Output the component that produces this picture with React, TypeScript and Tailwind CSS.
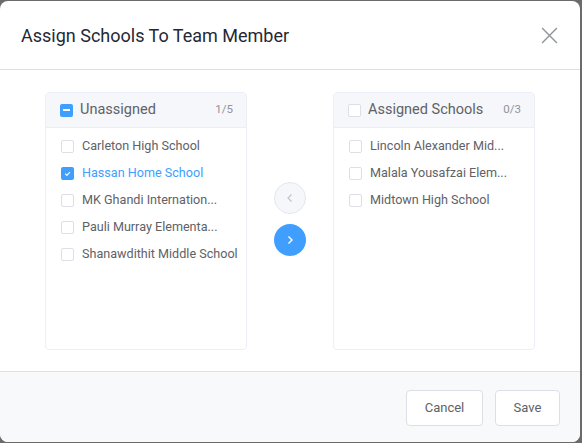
import React from 'react';

type Item = { label: string; checked?: boolean };

const unassigned: Item[] = [
  { label: 'Carleton High School' },
  { label: 'Hassan Home School', checked: true },
  { label: 'MK Ghandi Internation...' },
  { label: 'Pauli Murray Elementa...' },
  { label: 'Shanawdithit Middle School' },
];

const assigned: Item[] = [
  { label: 'Lincoln Alexander Mid...' },
  { label: 'Malala Yousafzai Elem...' },
  { label: 'Midtown High School' },
];

const Box = ({ state }: { state: 'off' | 'on' | 'mixed' }) => {
  if (state === 'off') {
    return <span className="w-[13px] h-[13px] shrink-0 rounded-[2px] border border-[#dcdfe6] bg-white" />;
  }
  return (
    <span className="w-[13px] h-[13px] shrink-0 rounded-[2px] bg-[#409eff] flex items-center justify-center">
      {state === 'on' ? (
        <svg width="9" height="9" viewBox="0 0 10 10" fill="none">
          <path d="M2.5 5.2l1.8 1.8 3.4-3.6" stroke="white" strokeWidth="1.3" />
        </svg>
      ) : (
        <span className="w-[7px] h-[2px] bg-white" />
      )}
    </span>
  );
};

const Panel = ({ title, count, head, items }: { title: string; count: string; head: 'off' | 'mixed'; items: Item[] }) => (
  <div className="w-[202px] h-[258px] border border-[#ebeef5] rounded-[4px] bg-white overflow-hidden flex flex-col">
    <div className="h-[35px] bg-[#f5f7fa] border-b border-[#ebeef5] flex items-center pl-[14px] pr-[13px]">
      <Box state={head} />
      <span className="ml-[7px] text-[14.5px] text-[#606266]">{title}</span>
      <span className="ml-auto text-[11.5px] text-[#909399]">{count}</span>
    </div>
    <div className="pt-[5px]">
      {items.map((it) => (
        <div key={it.label} className="h-[27px] flex items-center pl-[15px]">
          <Box state={it.checked ? 'on' : 'off'} />
          <span className={`ml-[8px] text-[12.6px] whitespace-nowrap ${it.checked ? 'text-[#409eff]' : 'text-[#606266]'}`}>
            {it.label}
          </span>
        </div>
      ))}
    </div>
  </div>
);

export default function App() {
  return (
    <div className="w-[582px] h-[443px] bg-[#6b6b6b] pt-px font-['Roboto',sans-serif]">
      <div className="w-[580px] h-[441px] bg-white rounded-[8px] overflow-hidden flex flex-col">
        <div className="h-[69px] shrink-0 border-b border-[#dcdfe6] flex items-center justify-between pl-[21px] pr-[22px]">
          <h2 className="text-[18px] text-[#1f2937]">Assign Schools To Team Member</h2>
          <svg width="17" height="17" viewBox="0 0 16 16" fill="none">
            <path d="M1 1l14 14M15 1L1 15" stroke="#909399" strokeWidth="1.3" />
          </svg>
        </div>
        <div className="h-[301px] shrink-0 flex items-start justify-center gap-[27px] pt-[22px]">
          <Panel title="Unassigned" count="1/5" head="mixed" items={unassigned} />
          <div className="flex flex-col gap-[10px] mt-[90px]">
            <div className="w-[32px] h-[32px] rounded-full bg-[#f5f7fa] border border-[#e4e7ed] flex items-center justify-center">
              <svg width="10" height="10" viewBox="0 0 10 10" fill="none">
                <path d="M6.5 1.5L3 5l3.5 3.5" stroke="#c0c4cc" strokeWidth="1.2" />
              </svg>
            </div>
            <div className="w-[32px] h-[32px] rounded-full bg-[#409eff] flex items-center justify-center">
              <svg width="10" height="10" viewBox="0 0 10 10" fill="none">
                <path d="M3.5 1.5L7 5 3.5 8.5" stroke="white" strokeWidth="1.4" />
              </svg>
            </div>
          </div>
          <Panel title="Assigned Schools" count="0/3" head="off" items={assigned} />
        </div>
        <div className="flex-1 bg-[#f8f9fb] border-t border-[#dcdfe6] flex items-center justify-end gap-[12px] pr-[20px] pt-[2px]">
          <button className="w-[77px] h-[36px] bg-white border border-[#dcdfe6] rounded-[4px] text-[13px] text-[#606266]">Cancel</button>
          <button className="w-[65px] h-[36px] bg-white border border-[#dcdfe6] rounded-[4px] text-[13px] text-[#606266]">Save</button>
        </div>
      </div>
    </div>
  );
}
